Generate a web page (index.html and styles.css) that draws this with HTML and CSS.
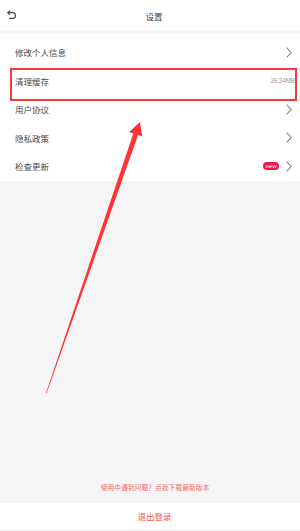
FILE: index.html
```html
<!DOCTYPE html>
<html lang="zh">
<head>
<meta charset="utf-8">
<link rel="stylesheet" href="styles.css">
</head>
<body>
<div class="page">
  <header class="header">
    <svg class="back" viewBox="0 0 10 10" width="10" height="10">
      <path d="M2.6 0.8 L0.8 2.6 L2.6 4.4" fill="none" stroke="#444" stroke-width="1.1" stroke-linejoin="round" stroke-linecap="round"/>
      <path d="M0.9 2.6 H5.6 A2.9 2.9 0 0 1 5.6 8.4 H2.6" fill="none" stroke="#444" stroke-width="1.1" stroke-linecap="round"/>
    </svg>
    <div class="title">设置</div>
  </header>
  <div class="list">
    <div class="row"><span class="label">修改个人信息</span><svg class="chev" viewBox="0 0 6 11" width="6" height="11"><polyline points="0.7,0.7 5.2,5.5 0.7,10.3" fill="none" stroke="#8a8a8a" stroke-width="1.1"/></svg></div>
    <div class="row"><span class="label">清理缓存</span><span class="value">39.34MB</span></div>
    <div class="row"><span class="label">用户协议</span><svg class="chev" viewBox="0 0 6 11" width="6" height="11"><polyline points="0.7,0.7 5.2,5.5 0.7,10.3" fill="none" stroke="#8a8a8a" stroke-width="1.1"/></svg></div>
    <div class="row"><span class="label">隐私政策</span><svg class="chev" viewBox="0 0 6 11" width="6" height="11"><polyline points="0.7,0.7 5.2,5.5 0.7,10.3" fill="none" stroke="#8a8a8a" stroke-width="1.1"/></svg></div>
    <div class="row"><span class="label">检查更新</span><span class="badge">new</span><svg class="chev" viewBox="0 0 6 11" width="6" height="11"><polyline points="0.7,0.7 5.2,5.5 0.7,10.3" fill="none" stroke="#8a8a8a" stroke-width="1.1"/></svg></div>
  </div>
  <div class="spacer"></div>
  <div class="tip">使用中遇到问题？点我下载最新版本</div>
  <div class="logout">退出登录</div>
  <div class="bottom"></div>

  <div class="highlight"></div>
  <svg class="arrow" viewBox="0 0 300 531" width="300" height="531">
    <polygon points="46,393 46.6,393.2 138.1,135.1 142.3,136.6 140,122 129.1,132 133.3,133.5" fill="#ff3333"/>
  </svg>
</div>
</body>
</html>
```
FILE: styles.css
```css
* { box-sizing: border-box; }
html, body { margin: 0; padding: 0; }
body {
  background: #f5f5f5;
  font-family: "Noto Sans CJK SC", "Liberation Sans", sans-serif;
  color: #333;
}
.page {
  position: relative;
  width: 300px;
  height: 531px;
  display: flex;
  flex-direction: column;
  overflow: hidden;
}
.header {
  position: relative;
  height: 30px;
  background: #fff;
  display: flex;
  align-items: center;
  justify-content: center;
  margin-bottom: 4px;
  padding-left: 8px;
}
.back {
  position: absolute;
  left: 7px;
  top: 10px;
}
.title {
  font-size: 8.5px;
  line-height: 10px;
  color: #444;
  padding-top: 2px;
}
.list {
  background: #fff;
  padding-top: 4px;
}
.row {
  height: 28.5px;
  display: flex;
  align-items: center;
  padding: 0 5px 0 15px;
}
.label {
  flex: 1;
  font-size: 8.5px;
  line-height: 10px;
  color: #4a4a4a;
}
.chev {
  margin-right: 3px;
}
.value {
  font-family: "Liberation Sans", sans-serif;
  font-size: 6.5px;
  color: #a0a0a0;
  letter-spacing: -0.2px;
}
.badge {
  font-family: "Liberation Sans", sans-serif;
  width: 16px;
  height: 8px;
  border-radius: 4px;
  background: #f5134f;
  color: #fff;
  font-size: 6px;
  line-height: 8px;
  text-align: center;
  margin-right: 7px;
}
.spacer { flex: 1; }
.tip {
  height: 10px;
  line-height: 10px;
  margin-bottom: 11px;
  text-align: center;
  font-size: 6.8px;
  color: #f46a6a;
  padding-left: 10px;
}
.logout {
  height: 26px;
  background: #fff;
  display: flex;
  align-items: center;
  justify-content: center;
  font-size: 8.5px;
  color: #f25858;
  padding-left: 9px;
}
.bottom { height: 2px; }
.highlight {
  position: absolute;
  left: 10px;
  top: 68px;
  width: 287px;
  height: 33px;
  border: 2px solid #f73a3a;
}
.arrow {
  position: absolute;
  left: 0;
  top: 0;
}
```
